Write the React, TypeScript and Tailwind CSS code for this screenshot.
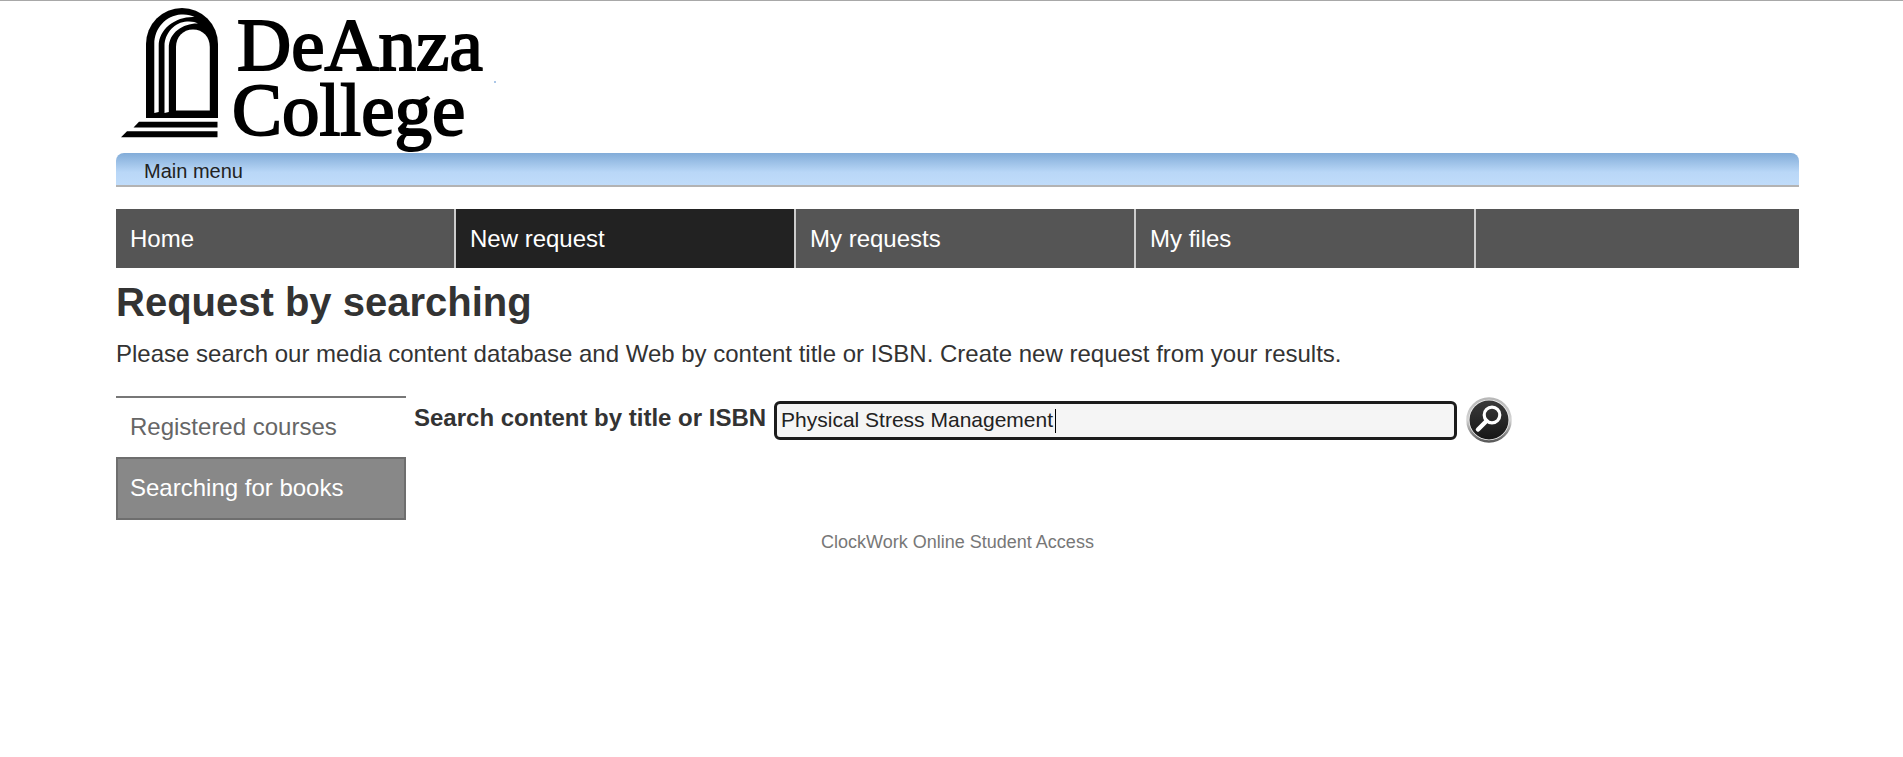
import { useState } from "react";

const NAV_ITEMS = [
  { label: "Home", active: false },
  { label: "New request", active: true },
  { label: "My requests", active: false },
  { label: "My files", active: false },
];

const SIDE_ITEMS = [
  { label: "Registered courses", active: false },
  { label: "Searching for books", active: true },
];

const Logo = () => {
  return (
    <svg width="400" height="152" viewBox="116 1 400 152" role="img" aria-label="De Anza College">
      <path d="M146 118V44a36 36 0 0 1 72 0V118Z" />
      <g fill="#fff">
        <path d="M154.300 113V44C154.300 28 166 15.500 181 14.500C187 14.200 191 15 194.500 17C177 16 158.700 28 158.700 46V112Z" />
        <path d="M164.500 113V46C164.500 33 175 22 187 21.500C192 21.200 195.500 22 198 23.500C184 23 168.800 32 168.800 48V112Z" />
        <path d="M176 110.500V47C176 37 183 29.500 193 29.500S209.800 37 209.800 47V110.500Z" />
      </g>
      <path d="M139 121.800H217.500V127.500H133.500Z" />
      <path d="M127 131.300H217.500V137.300H121Z" />
      <g
        fontFamily="'Liberation Serif', serif"
        fontSize="75"
        stroke="#000"
        strokeWidth="2"
      >
        <text x="237" y="70">DeAnza</text>
        <text x="232" y="135">College</text>
      </g>
      <circle cx="495" cy="82" r="1" fill="#8fb4e0" />
    </svg>
  );
};

const SearchIcon = () => {
  return (
    <svg viewBox="0 0 48 48" className="h-12 w-12" aria-hidden="true">
      <defs>
        <linearGradient id="rim" x1="0" y1="0" x2="0" y2="1">
          <stop offset="0" stopColor="#b8b8b8" />
          <stop offset="0.5" stopColor="#d4d4d4" />
          <stop offset="1" stopColor="#5a5a5a" />
        </linearGradient>
        <linearGradient id="face" x1="0" y1="0" x2="0" y2="1">
          <stop offset="0" stopColor="#3a3a3a" />
          <stop offset="1" stopColor="#161616" />
        </linearGradient>
      </defs>
      <circle cx="24" cy="24" r="21.500" fill="#f2f2f2" stroke="url(#rim)" strokeWidth="2.500" />
      <circle cx="24" cy="24" r="19.500" fill="url(#face)" />
      <circle cx="27" cy="19" r="7.800" fill="none" stroke="#fff" strokeWidth="3.200" />
      <path d="M21.500 25L13 33.500" stroke="#fff" strokeWidth="4.500" strokeLinecap="round" />
    </svg>
  );
};

const App = () => {
  const [query, setQuery] = useState("Physical Stress Management");
  const [editing, setEditing] = useState(false);

  return (
    <div className="min-h-screen border-t border-[#a8a8a8] bg-white pr-26 pl-29 font-['Liberation_Sans',Arial,sans-serif] text-2xl text-[#333]">
      <header>
        <Logo />
        <div className="flex h-[34px] items-center rounded-t-lg border-b-2 border-[#b3b3b3] bg-linear-to-b from-[#82acd8] via-[#b9d7f7] via-60% to-[#c0dcfa] px-7 pt-1 text-xl text-[#222]">
          <a href="#main">Main menu</a>
        </div>
      </header>

      <nav className="mt-[22px] flex bg-[#555]">
        {NAV_ITEMS.map((item) => (
          <a
            key={item.label}
            href="#nav"
            className={`w-[340px] border-r-2 border-[#ccc] px-3.5 py-3 leading-[35px] text-white ${
              item.active ? "bg-[#222]" : ""
            }`}
          >
            {item.label}
          </a>
        ))}
      </nav>

      <main>
        <h1 className="mt-2 text-[40px] leading-[52px] font-bold">Request by searching</h1>
        <p className="mt-2.5 leading-8">
          Please search our media content database and Web by content title or ISBN. Create new
          request from your results.
        </p>

        <div className="mt-6.5 flex items-start">
          <ul className="w-[290px] shrink-0">
            {SIDE_ITEMS.map((item) => (
              <li key={item.label}>
                <a
                  href="#side"
                  className={`block pt-[13px] pb-3.5 leading-8 ${
                    item.active
                      ? "border-2 border-[#6e6e6e] bg-[#888] px-3 text-white"
                      : "border-t-2 border-[#777] px-3.5 text-[#666]"
                  }`}
                >
                  {item.label}
                </a>
              </li>
            ))}
          </ul>

          <form className="ml-2 flex items-center" onSubmit={(e) => e.preventDefault()}>
            <label htmlFor="search" className="pb-1 font-bold">
              Search content by title or ISBN
            </label>
            <div className="relative ml-2">
              <input
                id="search"
                type="text"
                value={query}
                onChange={(e) => setQuery(e.target.value)}
                onFocus={() => setEditing(true)}
                className="h-[39px] w-[683px] rounded-md border-3 border-[#1c1c1c] bg-[#f5f5f5] px-1 text-[21px] text-[#222] outline-none"
              />
              {!editing && <span className="absolute top-2 left-[281px] h-6 w-px bg-black" />}
            </div>
            <button type="submit" aria-label="Search" className="ml-2 rounded-full">
              <SearchIcon />
            </button>
          </form>
        </div>
      </main>

      <footer className="mt-2 text-center text-lg text-[#777]">ClockWork Online Student Access</footer>
    </div>
  );
};

export default App;
